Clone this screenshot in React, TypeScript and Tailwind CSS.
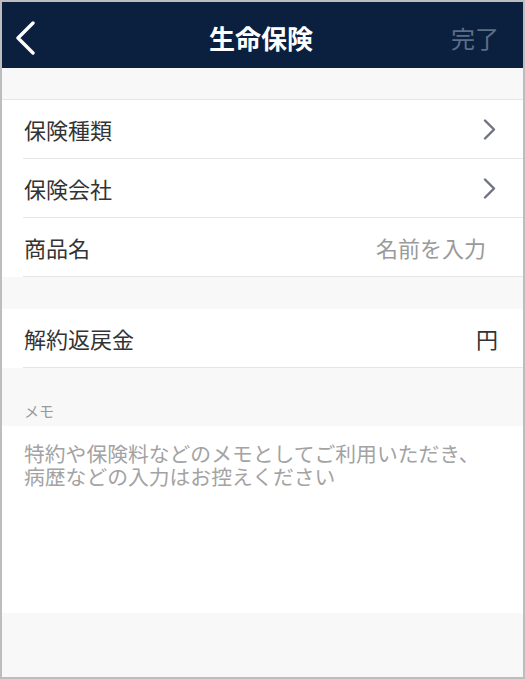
import React from "react";

const font = { fontFamily: '"Noto Sans CJK JP", "Noto Sans", sans-serif' };

function Chevron() {
  return (
    <svg width="13" height="21" viewBox="0 0 13 21" fill="none">
      <path d="M2 1.5 L11 10.5 L2 19.5" stroke="#6f7380" strokeWidth="2.4" strokeLinecap="round" strokeLinejoin="round" />
    </svg>
  );
}

function Row({ label, right }: { label: string; right: React.ReactNode }) {
  return (
    <div className="pl-[21px] bg-white">
      <div className="h-[59px] border-b border-[#e6e6e6] flex items-center justify-between pr-[27px]">
        <span className="text-[22px] leading-none text-[#333333] pl-[1px]">{label}</span>
        {right}
      </div>
    </div>
  );
}

export default function App() {
  return (
    <div style={font} className="w-[525px] h-[679px] border-2 border-[#bdbdbd] bg-[#f8f8f8] flex flex-col">
      <div className="h-[66px] bg-[#0b1f3f] grid grid-cols-[1fr_auto_1fr] items-center pt-[6px] pl-[13px] pr-[24px] shrink-0">
        <div className="flex items-center">
          <svg width="22" height="34" viewBox="0 0 22 34" fill="none">
            <path d="M18 2 L3 17 L18 32" stroke="#ffffff" strokeWidth="3.4" strokeLinecap="round" strokeLinejoin="round" />
          </svg>
        </div>
        <span className="text-[26px] font-bold text-white leading-none ml-[8px]">生命保険</span>
        <div className="flex justify-end">
          <span className="text-[24px] text-[#5d6f86] leading-none">完了</span>
        </div>
      </div>
      <div className="h-[31px] shrink-0" />
      <div className="border-t border-[#e6e6e6] bg-white">
        <Row label="保険種類" right={<Chevron />} />
        <Row label="保険会社" right={<Chevron />} />
        <Row
          label="商品名"
          right={<span className="text-[22px] leading-none text-[#9a9a9a] mr-[10px]">名前を入力</span>}
        />
      </div>
      <div className="h-[32px] shrink-0" />
      <Row label="解約返戻金" right={<span className="text-[22px] leading-none text-[#333333] -mr-[2px]">円</span>} />
      <div className="h-[58px] shrink-0 pl-[22px] pt-[30px]">
        <span className="text-[15px] leading-[20px] text-[#9a9a9a]">メモ</span>
      </div>
      <div className="h-[187px] bg-white shrink-0 pl-[22px] pr-[10px] pt-[16px]">
        <p className="text-[20.8px] leading-[22.5px] text-[#a3a3a3] whitespace-nowrap">
          特約や保険料などのメモとしてご利用いただき、
          <br />
          病歴などの入力はお控えください
        </p>
      </div>
    </div>
  );
}
